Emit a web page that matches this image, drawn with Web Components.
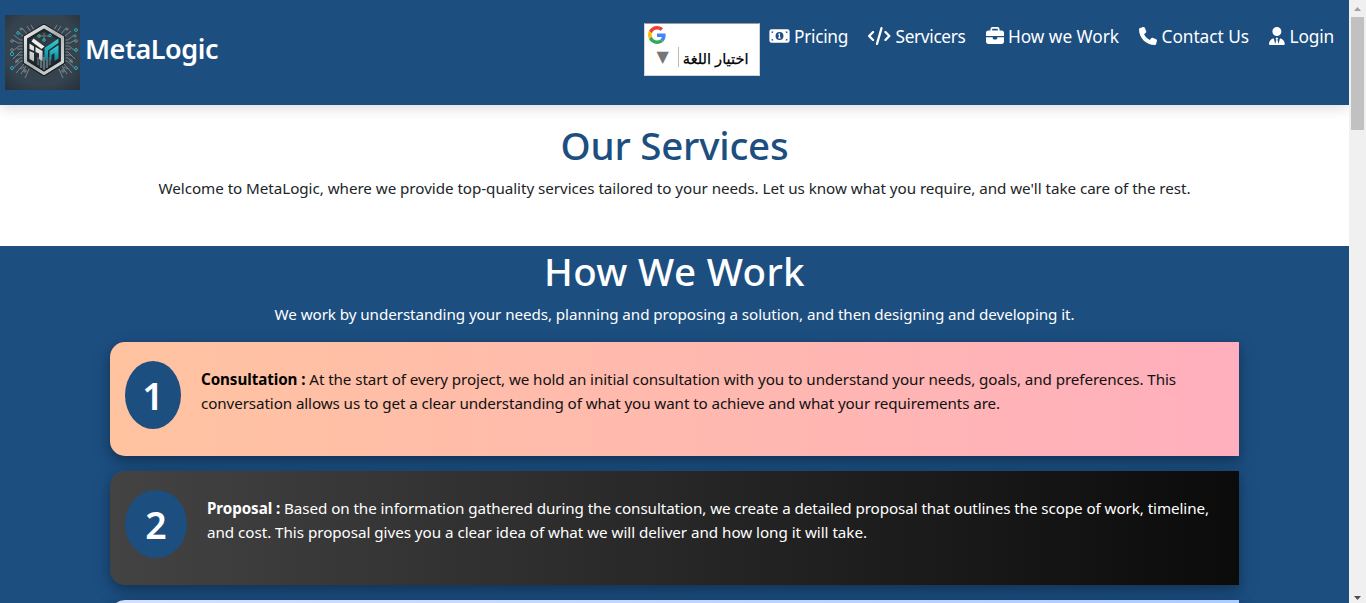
<!DOCTYPE html>
<html lang="en">
<head>
<meta charset="utf-8">
<title>MetaLogic</title>
<style>
html,body{margin:0;height:100%;overflow:hidden}
body{font-family:"Noto Sans","Open Sans",sans-serif;font-size:15.2px;line-height:24px;color:#212529;background:#fff;--brand:#1c4e80}
</style>
</head>
<body>
<meta-app></meta-app>
<script>
const define = (name, html, setup) => customElements.define(name, class extends HTMLElement {
  connectedCallback() {
    if (this.shadowRoot) return;
    const t = document.createElement('template');
    t.innerHTML = html;
    this.attachShadow({mode: 'open'}).append(t.content.cloneNode(true));
    if (setup) setup(this, this.shadowRoot);
  }
});

/* A single line whose tracking is adjusted to a given measure. */
define('fit-line', `<style>:host{display:block;white-space:nowrap}span{display:inline-block}</style><span><slot></slot></span>`, (el, root) => {
  const w = +el.getAttribute('w');
  el.style.width = w + 'px';
  const fit = () => {
    const s = root.querySelector('span');
    s.style.letterSpacing = '0px';
    const n = el.textContent.length;
    s.style.letterSpacing = ((w - s.getBoundingClientRect().width) / n).toFixed(4) + 'px';
  };
  queueMicrotask(fit);
  document.addEventListener('DOMContentLoaded', fit);
});

define('brand-logo', `<style>:host{display:block;width:75px;height:75px}svg{display:block}</style>
<svg width="75" height="75" viewBox="0 0 75 75">
<defs>
<radialGradient id="bg" cx=".5" cy=".45" r=".75"><stop offset="0" stop-color="#39444d"/><stop offset=".65" stop-color="#35434f"/><stop offset="1" stop-color="#24303c"/></radialGradient>
<linearGradient id="st" x1="0" y1="0" x2="1" y2="1"><stop offset="0" stop-color="#f3f4f3"/><stop offset=".5" stop-color="#a9aeae"/><stop offset="1" stop-color="#e0e2e1"/></linearGradient>
<linearGradient id="wh" x1="0" y1="0" x2="0" y2="1"><stop offset="0" stop-color="#f0f0ee"/><stop offset="1" stop-color="#b9bdbd"/></linearGradient>
<linearGradient id="cy" x1="0" y1="0" x2="0" y2="1"><stop offset="0" stop-color="#2fd0d3"/><stop offset="1" stop-color="#157f95"/></linearGradient>
<g id="tr" fill="none" stroke="#87959b" stroke-width=".8">
<path d="M19 22 12 16M19 25H15L9 20M19 28H13L8 25M19 31H14L9 35M19 34H12M19 37H15L8 44M19 40H12M19 43H15L10 48M19 46H16L6 55M19 49 11 58M21 51 16 59M24 54 20 63M22 19 17 13M26 17 22 11M29 15 26 10M19 52 15 54"/>
<circle cx="7" cy="26" r="1.3"/><circle cx="7" cy="35" r="1.4"/><circle cx="12" cy="46" r="1.2"/><circle cx="20" cy="56" r="1.2"/><circle cx="16" cy="14" r="1"/>
</g></defs>
<rect width="75" height="75" fill="url(#bg)"/>
<use href="#tr"/><use href="#tr" transform="matrix(-1 0 0 1 78 0)"/>
<g fill="#173e4a" stroke="#27b5c0" stroke-width="1"><circle cx="13" cy="18" r="1.3"/><circle cx="7" cy="39" r="1.6"/><circle cx="7" cy="53" r="1.4"/><circle cx="71" cy="15" r="1.4"/><circle cx="70" cy="21" r="1"/><circle cx="71" cy="35" r="1.3"/><circle cx="71" cy="53" r="1.4"/></g>
<path d="M39 11.500 57.500 22.500V47L39 58.500 20.500 47V22.500Z" fill="#303a42" stroke="#171f25" stroke-width="5.500" stroke-linejoin="round"/>
<path d="M39 11.500 57.500 22.500V47L39 58.500 20.500 47V22.500Z" fill="none" stroke="url(#st)" stroke-width="3.200" stroke-linejoin="round"/>
<path d="M39 15.500 54 24.500V45.500L39 55 24 45.500V24.500Z" fill="none" stroke="#151e24" stroke-width="1"/>
<g fill="none" stroke="#70848a" stroke-width=".8"><path d="M34 21H45M39 18V25M33 42V50M36 42V53M39 42V55M42 42V53M45 42V50"/></g>
<g fill="none" stroke-width="1"><circle cx="34" cy="21" r="1.300" stroke="#55b58a"/><circle cx="45" cy="20.500" r="1.300" stroke="#30b8bd"/><circle cx="39" cy="25" r="1.300" stroke="#30b8bd"/><circle cx="39" cy="41" r="1" stroke="#8a989c"/></g>
<path d="M24 24 39 33 54 24V47L46 51V42L32 42V51L24 47Z" fill="#1b252b" opacity=".75"/>
<path d="M36 43V53M39 42V55M42 43V53" stroke="#84949a" stroke-width=".8"/>
<path d="M28.500 23.500 39.500 31.500 36.500 34 26.500 26.500Z" fill="#efefed"/>
<path d="M24.500 28.500 29 31.500V36L24.500 34ZM24.500 36 29 38V46.500L24.500 44Z" fill="url(#wh)"/>
<path d="M30.500 32 37.500 36V46L34 44V38.500L30.500 37Z" fill="url(#wh)"/>
<path d="M53.500 23.500V28L43 35.500V44L39.500 46V33Z" fill="url(#cy)"/>
<path d="M53.500 30V43.500L49.500 46V38L46.500 40V45L44.500 46V36Z" fill="url(#cy)"/>
</svg>`);

const icons = {
  bill: ['0 0 576 512', '<rect y="64" width="576" height="384" rx="64" fill="#fff"/><path d="M64 176c27 0 48-21 48-48H64zM512 176c-27 0-48-21-48-48h48zM64 336c27 0 48 21 48 48H64zM512 336c-27 0-48 21-48 48h48z" fill="#1c4e80"/><circle cx="288" cy="256" r="112" fill="#1c4e80"/><path d="M252 188h52v104h16v32h-68v-32h16v-72h-16z" fill="#fff"/>'],
  code: ['0 0 640 512', '<path d="M392.8 1.2c-17-4.9-34.7 5-39.6 22l-128 448c-4.9 17 5 34.7 22 39.6s34.7-5 39.6-22l128-448c4.9-17-5-34.7-22-39.6zm80.6 120.1c-12.5 12.5-12.5 32.8 0 45.3L562.700 256l-89.400 89.400c-12.5 12.5-12.5 32.8 0 45.3s32.8 12.5 45.3 0l112-112c12.5-12.5 12.5-32.8 0-45.3l-112-112c-12.5-12.5-32.8-12.5-45.3 0zm-306.700 0c-12.5-12.5-32.8-12.5-45.3 0l-112 112c-12.5 12.5-12.5 32.8 0 45.3l112 112c12.5 12.5 32.8 12.5 45.3 0s12.5-32.8 0-45.3L77.300 256l89.400-89.400c12.5-12.5 12.5-32.8 0-45.3z"/>'],
  case: ['0 0 512 512', '<path d="M184 48H328c4.4 0 8 3.6 8 8V96H176V56c0-4.4 3.6-8 8-8zm-56 8V96H64C28.7 96 0 124.7 0 160v96H192 320 512V160c0-35.3-28.7-64-64-64H384V56c0-30.9-25.1-56-56-56H184c-30.9 0-56 25.1-56 56zM512 288H320v32c0 17.7-14.3 32-32 32H224c-17.7 0-32-14.3-32-32V288H0V416c0 35.3 28.7 64 64 64H448c35.3 0 64-28.7 64-64V288z"/>'],
  phone: ['0 0 512 512', '<path d="M164.9 24.6c-7.7-18.6-28-28.5-47.4-23.2l-88 24C12.1 30.2 0 46 0 64C0 311.4 200.6 512 448 512c18 0 33.8-12.1 38.6-29.5l24-88c5.3-19.4-4.6-39.7-23.2-47.4l-96-40c-16.3-6.8-35.2-2.1-46.3 11.6L304.7 368C234.3 334.7 177.3 277.7 144 207.3L193.3 167c13.7-11.2 18.4-30 11.6-46.3l-40-96z"/>'],
  user: ['0 0 448 512', '<path d="M96 128a128 128 0 1 0 256 0A128 128 0 1 0 96 128zm94.5 200.2l18.6 31L175.8 483.1l-36-146.9c-2-8.1-9.8-13.4-17.9-11.3C51.900 342.400 0 405.800 0 481.300c0 17 13.8 30.7 30.7 30.7H417.300c17 0 30.7-13.8 30.7-30.7c0-75.5-51.9-138.9-121.9-156.4c-8.1-2-15.9 3.3-17.9 11.3l-36 146.9L238.900 359.200l18.6-31c6.4-10.7-1.3-24.2-13.7-24.2H204.300c-12.4 0-20.1 13.600-13.700 24.200z"/>']
};
define('nav-link', `<style>:host{display:flex;color:#fff;font-size:17.300px;line-height:27px;height:27px}svg{display:block;flex:none;margin-top:4px;fill:#fff}.i{flex:none}</style><div class="i"></div><fit-line></fit-line>`, (el, root) => {
  const [vb, body] = icons[el.getAttribute('icon')];
  const iw = el.getAttribute('iw');
  root.querySelector('.i').innerHTML = `<svg width="${iw}" height="18" viewBox="${vb}">${body}</svg>`;
  root.querySelector('.i').style.width = el.getAttribute('box') + 'px';
  const f = document.createElement('fit-line');
  f.setAttribute('w', el.getAttribute('w'));
  f.textContent = el.getAttribute('label');
  root.querySelector('fit-line').replaceWith(f);
});

define('language-picker', `<style>
:host{display:block;box-sizing:border-box;width:116px;height:53px;background:#fff;border:1px solid #d5d5d5;border-top-color:#9b9b9b;padding:2px 10px 0 3px;color:#000}
svg{display:block}.row{display:flex;align-items:center;height:20px;margin-top:3px;padding-left:9px}
.a{flex:none;width:13px;font:16px/20px "DejaVu Sans",sans-serif;color:#767676;overflow:visible}
i{flex:none;width:1px;height:20px;background:#bbb;margin:0 4px 0 8px}
.t{flex:none;width:66px;white-space:nowrap;direction:rtl;font:14.600px/20px "Liberation Sans","DejaVu Sans",sans-serif;padding-top:3px;-webkit-text-stroke:.25px #000}
</style>
<svg width="18" height="18" viewBox="0 0 48 48"><path fill="#EA4335" d="M24 9.500c3.540 0 6.710 1.220 9.210 3.600l6.850-6.850C35.900 2.380 30.470 0 24 0 14.620 0 6.510 5.380 2.560 13.220l7.980 6.190C12.430 13.720 17.740 9.500 24 9.500z"/><path fill="#4285F4" d="M46.980 24.550c0-1.570-.15-3.090-.38-4.550H24v9.020h12.940c-.58 2.960-2.260 5.480-4.780 7.180l7.730 6c4.510-4.180 7.090-10.360 7.090-17.650z"/><path fill="#FBBC05" d="M10.530 28.590c-.48-1.450-.76-2.990-.76-4.590s.27-3.140.76-4.590l-7.980-6.190C.92 16.460 0 20.120 0 24c0 3.880.92 7.540 2.560 10.780l7.970-6.190z"/><path fill="#34A853" d="M24 48c6.480 0 11.930-2.130 15.890-5.810l-7.730-6c-2.150 1.450-4.920 2.300-8.160 2.300-6.260 0-11.570-4.220-13.470-9.910l-7.980 6.190C6.510 42.620 14.620 48 24 48z"/></svg>
<div class="row"><span class="a">▼</span><i></i><span class="t" lang="ar">اختيار اللغة</span></div>`);

define('site-header', `<style>
:host{display:flex;box-sizing:border-box;height:105px;background:var(--brand);box-shadow:0 2px 14px rgba(0,0,0,.16);padding:15px 15px 0 5px;position:relative}
.n{font-size:27px;font-weight:600;line-height:40px;color:#fff;margin:14px 0 0 5px}
nav{display:flex;margin-left:auto;gap:20px;padding-top:8px}
language-picker{margin-right:-11px}
</style><brand-logo></brand-logo><fit-line class="n" w="133">MetaLogic</fit-line>
<nav><language-picker></language-picker>
<nav-link icon="bill" iw="21" box="25.500" w="54" label="Pricing"></nav-link>
<nav-link icon="code" iw="22.500" box="27.500" w="70" label="Servicers"></nav-link>
<nav-link icon="case" iw="18" box="22.500" w="111" label="How we Work"></nav-link>
<nav-link icon="phone" iw="18" box="22.500" w="87.500" label="Contact Us"></nav-link>
<nav-link icon="user" iw="15.750" box="20.500" w="44.500" label="Login"></nav-link></nav>`);

define('section-intro', `<style>:host{display:flex;flex-direction:column;align-items:center}
.h{font-size:38.500px;font-weight:540;line-height:46px}.p{margin-top:8px}</style><fit-line class="h"></fit-line><fit-line class="p"></fit-line>`, (el, root) => {
  for (const k of ['h', 'p']) {
    const f = document.createElement('fit-line');
    f.className = k; f.setAttribute('w', el.getAttribute(k + 'w')); f.textContent = el.getAttribute(k + 't');
    root.querySelector('.' + k).replaceWith(f);
  }
});

define('step-card', `<style>
:host{display:flex;box-sizing:border-box;height:114px;border-radius:15px 0 0 15px;padding:19px 15px 0;box-shadow:0 4px 8px rgba(0,0,0,.2),0 6px 20px rgba(0,0,0,.19)}
.b{flex:none;height:68px;border-radius:50%;background:var(--brand);color:#fff;font-size:37.500px;font-weight:650;line-height:70px;text-align:center}
.t{margin:6px 0 0 20px}</style><div class="b"></div><div class="t"><slot></slot></div>`, (el, root) => {
  const b = root.querySelector('.b');
  b.textContent = el.getAttribute('no'); b.style.width = el.getAttribute('bw') + 'px';
});

define('scroll-rail', `<style>:host{display:flex;flex-direction:column;align-items:center;width:17px;height:603px;background:#f0f0f0}
svg{display:block;flex:none}div{width:13px;height:113px;background:#c1c1c1}svg:last-child{margin-top:auto}</style>
<svg width="17" height="17"><path d="M5 11h7L8.500 7z" fill="#a0a0a0"/></svg><div></div><svg width="17" height="17"><path d="M5 10h7l-3.500 4z" fill="#505050"/></svg>`);

define('meta-app', `<style>
:host{display:flex;height:603px;overflow:hidden}
main{flex:1;min-width:0;overflow:hidden}
.s{height:141px;box-sizing:border-box;padding-top:17px}
.w{background:var(--brand);height:480px;box-sizing:border-box;padding-top:2px;color:#fff}
.c{display:flex;flex-direction:column;gap:15px;margin:16px 110px 0}
.one{background:linear-gradient(90deg,#ffc3a0,#ffafbd);color:#111}
.two{background:linear-gradient(90deg,#434343,#0b0b0b);color:#fff}
.three{background:linear-gradient(90deg,#d5deff,#accbff)}
b{font-weight:700}.one b{color:#000}
</style><main><site-header></site-header>
<div class="s"><section-intro id="srv" hw="228" ht="Our Services" pw="1032" pt="Welcome to MetaLogic, where we provide top-quality services tailored to your needs. Let us know what you require, and we'll take care of the rest."></section-intro></div>
<div class="w"><section-intro hw="261" ht="How We Work" pw="800" pt="We work by understanding your needs, planning and proposing a solution, and then designing and developing it."></section-intro>
<div class="c"><step-card class="one" no="1" bw="56"><fit-line w="975"><b>Consultation :</b> At the start of every project, we hold an initial consultation with you to understand your needs, goals, and preferences. This</fit-line><fit-line w="799">conversation allows us to get a clear understanding of what you want to achieve and what your requirements are.</fit-line></step-card>
<step-card class="two" no="2" bw="62"><fit-line w="1002"><b>Proposal :</b> Based on the information gathered during the consultation, we create a detailed proposal that outlines the scope of work, timeline,</fit-line><fit-line w="660">and cost. This proposal gives you a clear idea of what we will deliver and how long it will take.</fit-line></step-card>
<step-card class="three" no="" bw="62"></step-card></div></div></main><scroll-rail></scroll-rail>`, (el, root) => {
  const s = document.createElement('style');
  s.textContent = '.h{color:var(--brand)}';
  root.querySelector('#srv').shadowRoot.append(s);
});
</script>
</body>
</html>
